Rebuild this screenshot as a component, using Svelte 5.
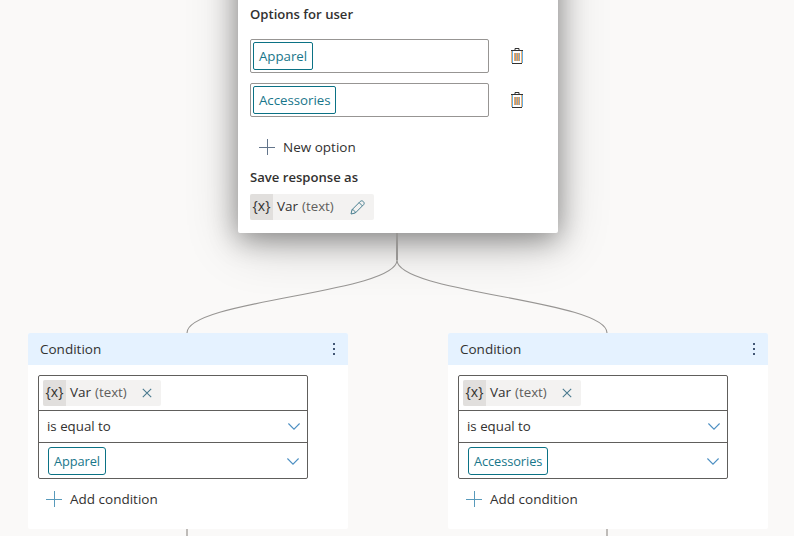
<script>
  const options = ['Apparel', 'Accessories'];
  const conditions = [
    { x: 28, value: 'Apparel' },
    { x: 448, value: 'Accessories' }
  ];
</script>

{#snippet plus()}
  <svg class="plus" width="16" height="16" viewBox="0 0 16 16"><path d="M8.5 0v16M0 8.5h16" /></svg>
{/snippet}

{#snippet chevron()}
  <svg class="chevron" width="12" height="7" viewBox="0 0 12 7"><path d="M.4.5 6 6.1 11.6.5" /></svg>
{/snippet}

{#snippet variable()}
  <span class="fx">{'{x}'}</span><span class="name">Var</span><span class="type">(text)</span>
{/snippet}

<main class="canvas">
  <section class="card question">
    <h2 class="options-title">Options for user</h2>
    {#each options as option}
      <div class="option">
        <div class="field"><span class="tag">{option}</span></div>
        <svg class="trash" width="14" height="16" viewBox="0 0 14 16">
          <path class="bars" d="M4.5 5v8M6.5 5v8M8.5 5v8" />
          <path class="gaps" d="M5.5 5v8M7.5 5v8M9.5 5v8" />
          <path class="orange" d="M1.5 3v12M11.5 3v12" />
          <path class="blue" d="M2.5 3v12M12.5 3v12" />
          <path class="dark" d="M1 2.5h12M5 2V.5h4V2M2 15.5h10" />
        </svg>
      </div>
    {/each}
    <div class="new-option">{@render plus()}<span>New option</span></div>
    <h2 class="save-title">Save response as</h2>
    <div class="chip edit">
      {@render variable()}
      <svg class="pencil" width="15" height="15" viewBox="0 0 15 15">
        <path d="M1 14l1-4.3L10.3 1.4c1.9-1.9 5.2 1.4 3.3 3.3L5.3 13zM9.1 2.6l3.3 3.3M2 9.7c1.9.1 3.2 1.4 3.3 3.3" />
      </svg>
    </div>
  </section>

  <svg class="wires" width="794" height="536" viewBox="0 0 794 536">
    <path class="stem" d="M397 233v27" />
    <path d="M397 260C397 293 187 300 187 333M397 260C397 293 607 300 607 333" />
    <path class="tail" d="M187 529v7M607 529v7" />
  </svg>

  {#each conditions as condition}
    <section class="card condition" style="left: {condition.x}px">
      <header>
        <span>Condition</span>
        <svg width="4" height="14" viewBox="0 0 4 14"><path d="M1 1h2v2H1zM1 6h2v2H1zM1 11h2v2H1z" /></svg>
      </header>
      <div class="rule">
        <div class="row subject">
          <div class="chip">
            {@render variable()}
            <svg class="close" width="10" height="10" viewBox="0 0 10 10"><path d="M.8.8l8.4 8.4M9.2.8L.8 9.2" /></svg>
          </div>
        </div>
        <div class="row operator"><span>is equal to</span>{@render chevron()}</div>
        <div class="row value"><span class="tag">{condition.value}</span>{@render chevron()}</div>
      </div>
      <div class="add">{@render plus()}<span>Add condition</span></div>
    </section>
  {/each}
</main>

<style>
  :global(body) { margin: 0; overflow: hidden; }
  .canvas {
    position: relative;
    width: 794px;
    height: 536px;
    overflow: hidden;
    background: #faf9f8;
    color: #323130;
    font: 13.5px/20px 'Open Sans', 'Noto Sans', sans-serif;
    white-space: nowrap;
  }
  .canvas * { box-sizing: border-box; }
  svg { display: block; flex: none; fill: none; }
  .card { position: absolute; width: 320px; background: #fff; border-radius: 2px; }
  .question {
    left: 238px;
    top: -100px;
    height: 333px;
    padding: 104px 12px 0;
    box-shadow: 0 6px 28px rgba(0, 0, 0, .38), 0 10px 54px rgba(0, 0, 0, .2);
  }
  h2 { margin: 0; font-size: 13.1px; line-height: 20px; font-weight: 600; }
  .options-title { margin-bottom: 15px; }
  .option { display: flex; align-items: center; margin-bottom: 10px; }
  .field {
    width: 239px;
    height: 34px;
    padding: 2px;
    border: 1px solid #979593;
    border-radius: 2px;
  }
  .tag {
    display: inline-block;
    height: 28px;
    padding: 0 5px;
    border: 1px solid #0b7285;
    border-radius: 3px;
    color: #18768a;
    font-size: 13.3px;
    letter-spacing: -.04px;
    line-height: 26px;
  }
  .field .tag { border-radius: 2px; }
  .trash { margin-left: 21px; }
  .trash path { stroke-width: 1; }
  .trash .dark { stroke: #323130; }
  .trash .orange { stroke: #efb478; }
  .trash .blue { stroke: #64aee4; }
  .trash .bars { stroke: #efa55c; }
  .trash .gaps { stroke: #93a3ad; }
  .new-option, .add { display: flex; align-items: center; height: 20px; }
  .new-option { margin: 20px 0 10px 9px; }
  .new-option span, .add span { margin-left: 8px; }
  .plus path { stroke: #63758b; }
  .add .plus path { stroke: #589abb; }
  .chip { display: flex; align-items: center; height: 26px; background: #f3f2f1; border-radius: 2px; }
  .edit { width: 124px; margin-top: 7px; }
  .fx {
    width: 23px;
    height: 100%;
    background: #e1dfdd;
    border-radius: 2px 0 0 2px;
    text-align: center;
    font-size: 14px;
    line-height: 24px;
  }
  .name, .type { padding-bottom: 2px; }
  .name { width: 25px; margin-left: 4px; }
  .type { width: 34px; color: #605e5c; font-size: 13.3px; }
  .pencil { margin-left: 14px; }
  .pencil path { stroke: #487f90; }
  .wires { position: absolute; inset: 0; }
  .wires path { stroke: #979593; stroke-width: 1.1; }
  .wires .stem { stroke-width: 2; }
  .wires .tail { stroke: #bebbb8; stroke-width: 2; }
  .condition { top: 333px; height: 196px; }
  header {
    display: flex;
    align-items: center;
    justify-content: space-between;
    height: 32px;
    padding: 0 12px;
    background: #e5f2ff;
    border-radius: 2px 2px 0 0;
  }
  header path { fill: #425775; }
  .rule { width: 270px; margin: 10px 0 0 10px; border: 1px solid #605e5c; border-radius: 2px; }
  .row { display: flex; align-items: center; justify-content: space-between; }
  .subject { height: 34px; padding-left: 4px; }
  .subject .chip { width: 118px; }
  .close { margin-left: 13px; }
  .close path { stroke: #4a7a8f; stroke-width: 1.1; }
  .operator { height: 32px; padding: 0 7px 0 8px; border-top: 1px solid #605e5c; }
  .operator span { padding-bottom: 1px; font-size: 13.3px; }
  .value { height: 36px; padding: 1px 8px 0 9px; border-top: 1px solid #605e5c; }
  .value .tag { font-size: 12.8px; letter-spacing: -.08px; }
  .chevron path { stroke: #4c8fc2; stroke-width: 1.1; }
  .add { margin: 10px 0 0 18px; }
</style>
